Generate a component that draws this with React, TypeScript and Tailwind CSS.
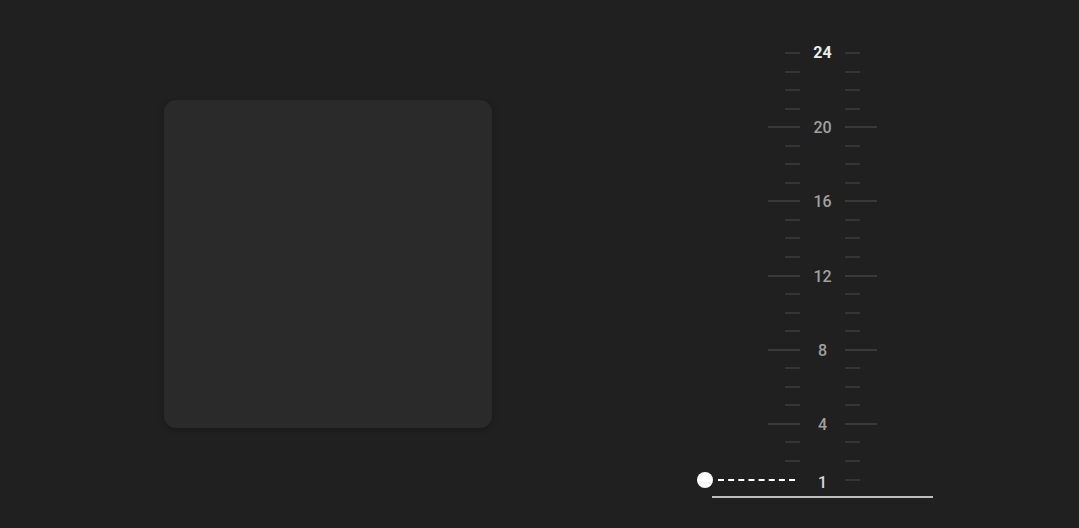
import React from "react";

const UNITS = Array.from({ length: 24 }, (_, i) => 24 - i);

function Tick({ major }: { major: boolean }) {
  return <div className={major ? "h-[2px] w-[32px] bg-[#393939]" : "h-[2px] w-[15px] bg-[#353535]"} />;
}

function RulerRow({ n }: { n: number }) {
  const major = n % 4 === 0 && n !== 24;
  const showLabel = n % 4 === 0 || n === 1;
  let labelCls = "translate-y-[1px] text-[16px] font-medium leading-none text-[#a0a0a0]";
  if (n === 24) labelCls = "text-[16px] font-bold leading-none text-[#ececec]";
  if (n === 1) labelCls = "translate-y-[3px] text-[16px] font-medium leading-none text-[#d8d8d8]";
  return (
    <div className="flex h-[18.55px] items-center">
      <div className="flex w-[103px] items-center justify-end">
        {n === 1 ? (
          <div className="flex w-full items-center">
            <div className="h-[16px] w-[16px] rounded-full bg-white" />
            <div className="ml-[5px] w-[77px] border-t-2 border-dashed border-white" />
          </div>
        ) : (
          <Tick major={major} />
        )}
      </div>
      <div className="flex w-[45px] justify-center">
        {showLabel && <span className={labelCls}>{n}</span>}
      </div>
      <div className="flex w-[34px] items-center">
        <Tick major={major} />
      </div>
    </div>
  );
}

export default function App() {
  return (
    <div className="flex h-[528px] w-full bg-[#202020]" style={{ fontFamily: "Roboto, 'Noto Sans', sans-serif" }}>
      <div className="pl-[164px] pt-[100px]">
        <div className="h-[328px] w-[328px] rounded-[12px] bg-[#2a2a2a] shadow-[0_2px_6px_rgba(0,0,0,0.25)]" />
      </div>
      <div className="ml-[205px] flex flex-col pt-[43.7px]">
        {UNITS.map((n) => (
          <RulerRow key={n} n={n} />
        ))}
        <div className="ml-[15px] mt-[7px] h-[2px] w-[221px] bg-[#bdbdbd]" />
      </div>
    </div>
  );
}
